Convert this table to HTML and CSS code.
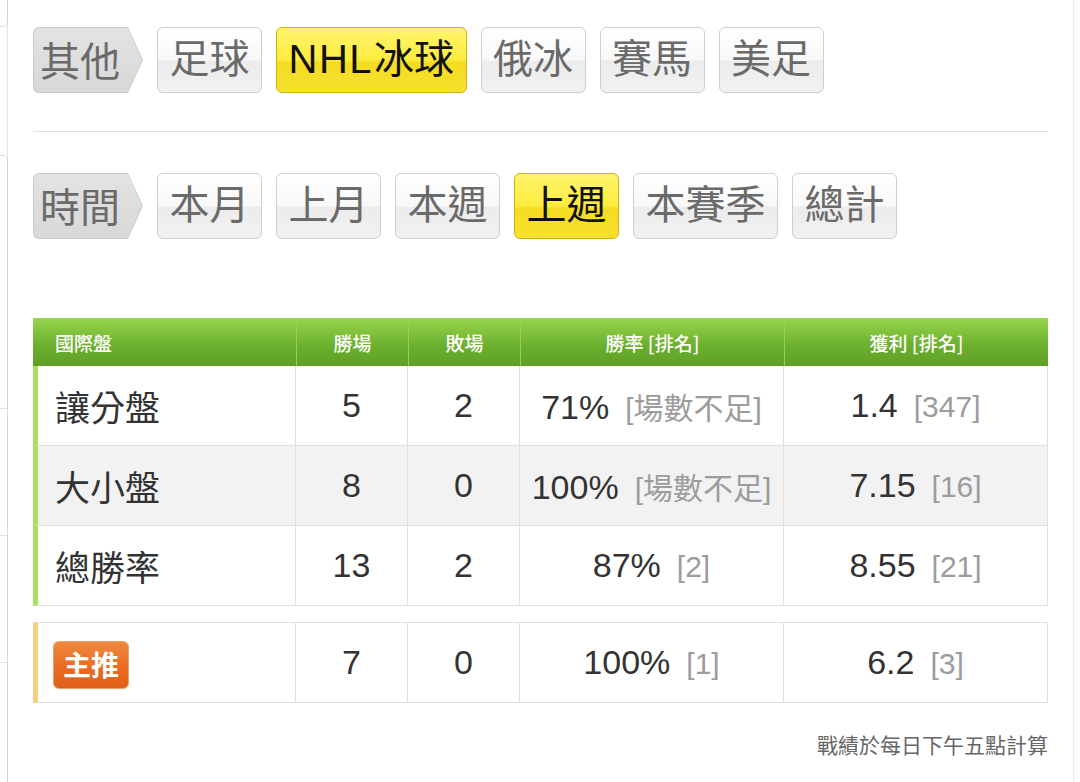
FILE: index.html
```html
<!DOCTYPE html>
<html lang="zh-Hant">
<head>
<meta charset="utf-8">
<link rel="stylesheet" href="styles.css">
</head>
<body>
<div class="page">
  <aside class="side">
    <div class="side-top"></div>
    <div class="side-box">
      <div class="side-row"></div>
      <div class="side-row"></div>
      <div class="side-row"></div>
    </div>
  </aside>
  <main class="main">
    <div class="filter">
      <div class="tag"><div class="tag-in">其他</div></div>
      <div class="btn">足球</div>
      <div class="btn on"><span class="latin">NHL</span>冰球</div>
      <div class="btn">俄冰</div>
      <div class="btn">賽馬</div>
      <div class="btn">美足</div>
    </div>
    <div class="divider"></div>
    <div class="filter">
      <div class="tag"><div class="tag-in">時間</div></div>
      <div class="btn">本月</div>
      <div class="btn">上月</div>
      <div class="btn">本週</div>
      <div class="btn on">上週</div>
      <div class="btn">本賽季</div>
      <div class="btn">總計</div>
    </div>

    <table class="stats">
      <colgroup>
        <col class="c1"><col class="c2"><col class="c3"><col class="c4"><col class="c5">
      </colgroup>
      <thead>
        <tr><th class="first">國際盤</th><th>勝場</th><th>敗場</th><th>勝率 [排名]</th><th>獲利 [排名]</th></tr>
      </thead>
      <tbody>
        <tr><td class="label">讓分盤</td><td>5</td><td>2</td><td>71%<span class="rk">[場數不足]</span></td><td>1.4<span class="rk">[347]</span></td></tr>
        <tr class="alt"><td class="label">大小盤</td><td>8</td><td>0</td><td>100%<span class="rk">[場數不足]</span></td><td>7.15<span class="rk">[16]</span></td></tr>
        <tr><td class="label">總勝率</td><td>13</td><td>2</td><td>87%<span class="rk">[2]</span></td><td>8.55<span class="rk">[21]</span></td></tr>
      </tbody>
    </table>

    <table class="stats pick">
      <colgroup>
        <col class="c1"><col class="c2"><col class="c3"><col class="c4"><col class="c5">
      </colgroup>
      <tbody>
        <tr><td class="label"><span class="badge">主推</span></td><td>7</td><td>0</td><td>100%<span class="rk">[1]</span></td><td>6.2<span class="rk">[3]</span></td></tr>
      </tbody>
    </table>

    <p class="note">戰績於每日下午五點計算</p>
  </main>
  <div class="edge"></div>
</div>
</body>
</html>
```

FILE: styles.css
```css
* { box-sizing: border-box; }
html, body { margin: 0; padding: 0; background: #fff; }
body {
  font-family: "Liberation Sans", "Noto Sans CJK TC", sans-serif;
  width: 1080px;
  height: 782px;
  overflow: hidden;
}
.page {
  display: flex;
  height: 782px;
}
.side {
  width: 8px;
  flex: none;
  border-right: 1px solid #e6e6e6;
  display: flex;
  flex-direction: column;
}
.side-top {
  height: 27px;
  border-bottom: 1px solid #dcdcdc;
  border-right: 1px solid #d6d6d6;
  border-bottom-right-radius: 5px;
  margin-right: -1px;
}
.side-box {
  margin-top: 128px;
  flex: 1;
  border-top: 1px solid #dcdcdc;
  border-right: 1px solid #d6d6d6;
  border-top-right-radius: 5px;
  margin-right: -1px;
  padding-top: 126px;
}
.side-row {
  height: 127px;
  border-bottom: 1px solid #e2e2e2;
}
.main {
  width: 1015px;
  margin-left: 25px;
  flex: none;
  padding-top: 27px;
}
.edge {
  width: 1px;
  margin-left: 25px;
  background: #ececec;
  height: 100%;
}
.filter {
  display: flex;
  gap: 14px;
  height: 66px;
}
.tag {
  width: 110px;
  height: 66px;
  background: #c9c9c9;
  border-radius: 6px 0 0 6px;
  clip-path: polygon(0 0, 95px 0, 110px 50%, 95px 100%, 0 100%);
  padding: 1px;
}
.tag-in {
  height: 64px;
  border-radius: 5px 0 0 5px;
  background: linear-gradient(#e3e3e3, #d8d8d8);
  clip-path: polygon(0 0, 94px 0, 108px 50%, 94px 100%, 0 100%);
  color: #6a6a6a;
  font-family: "Noto Sans CJK TC", sans-serif;
  font-size: 40px;
  line-height: 62px;
  padding-left: 6px;
}
.btn {
  height: 66px;
  padding: 0 11.5px;
  border: 1px solid #cfcfcf;
  border-radius: 6px;
  background: linear-gradient(#ffffff 0%, #f8f8f8 50%, #ececec 52%, #f1f1f1 100%);
  color: #6a6a6a;
  font-size: 40px;
  line-height: 62px;
  font-family: "Liberation Sans", "Noto Sans CJK TC", sans-serif;
  white-space: nowrap;
}
.btn .latin { letter-spacing: 1.5px; margin-right: 1px; }
.btn.on {
  background: linear-gradient(#fff46e 0%, #fdec3e 50%, #f4dc22 54%, #f6e12e 100%);
  border-color: #cdb20a;
  color: #111;
}
.divider {
  height: 1px;
  background: #dedede;
  margin: 38px 0 41px;
}
.stats {
  width: 1015px;
  border-collapse: separate;
  border-spacing: 0;
  table-layout: fixed;
  margin-top: 79px;
}
.c1 { width: 263px; }
.c2 { width: 112px; }
.c3 { width: 112px; }
.c4 { width: 264px; }
.c5 { width: 264px; }
.stats th {
  height: 48px;
  background: linear-gradient(#99d54e, #6db12f 55%, #5e9f26);
  color: #fff;
  font-family: "Noto Sans CJK TC", sans-serif;
  font-weight: 500;
  font-size: 19px;
  text-align: center;
  border-left: 1px solid #97cf5e;
  padding: 0;
}
.stats th.first {
  text-align: left;
  padding-left: 22px;
  border-left: none;
}
.stats td {
  height: 80px;
  border-right: 1px solid #e0e0e0;
  border-bottom: 1px solid #e0e0e0;
  text-align: center;
  font-size: 34px;
  color: #333;
  white-space: nowrap;
  padding: 0;
}
.stats td.label {
  text-align: left;
  padding-left: 17px;
  border-left: 5px solid #a9df5e;
  font-family: "Noto Sans CJK TC", sans-serif;
  font-size: 35px;
}
.stats tr.alt td { background: #f2f2f2; }
.rk {
  color: #9c9c9c;
  font-size: 30px;
  margin-left: 16px;
  font-family: "Liberation Sans", "Noto Sans CJK TC", sans-serif;
}
.pick { margin-top: 16px; }
.pick td {
  height: 81px;
  border-top: 1px solid #e0e0e0;
}
.pick td.label {
  border-left-color: #f6d07c;
  padding-left: 15px;
}
.badge {
  display: inline-block;
  width: 76px;
  height: 48px;
  border-radius: 6px;
  background: linear-gradient(#f0883e, #e86a20 60%, #e05f18);
  border: 1px solid #e9a06a;
  color: #fff;
  font-weight: 700;
  font-size: 28px;
  line-height: 44px;
  text-align: center;
  vertical-align: middle;
  margin-top: -4px;
}
.note {
  margin: 26px 0 0;
  text-align: right;
  color: #666;
  font-family: "Noto Sans CJK TC", sans-serif;
  font-size: 21px;
  line-height: 30px;
}
```
